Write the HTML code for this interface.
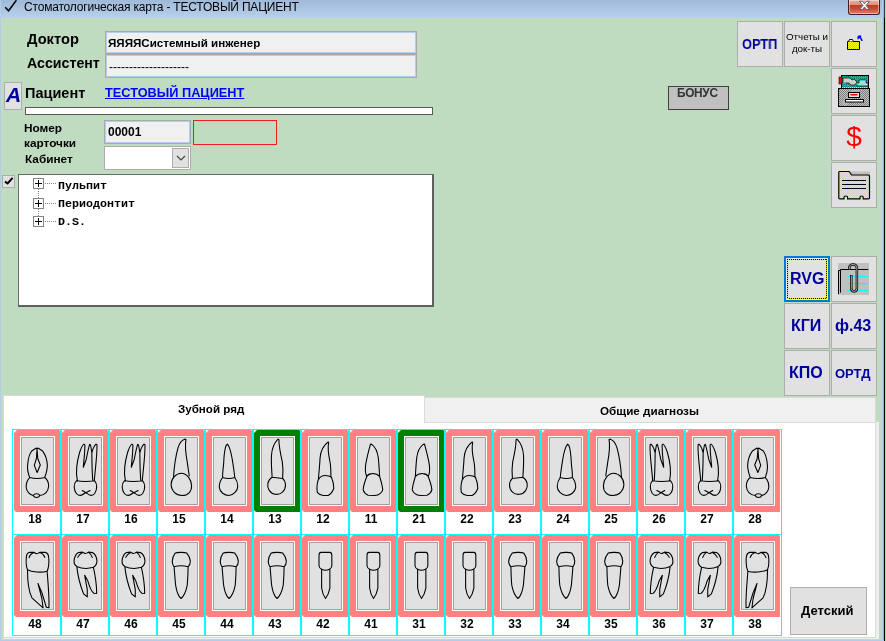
<!DOCTYPE html>
<html lang="ru"><head><meta charset="utf-8"><title>Стоматологическая карта</title>
<style>
*{box-sizing:border-box;margin:0;padding:0}
html,body{width:886px;height:641px;overflow:hidden}
body{position:relative;background:#c0dcc0;font-family:"Liberation Sans",sans-serif;color:#000}
.a{position:absolute}
.t{position:absolute;white-space:nowrap;line-height:1;will-change:transform}
.b{font-weight:bold}
#title{left:0;top:0;width:886px;height:18px;background:linear-gradient(#9fb9d9,#b7d1eb)}
.btn{position:absolute;width:46px;height:46px;background:#e1e1e1;border:1px solid #adadad}
.btn .t{color:#00009c;font-weight:bold}
.fld{position:absolute;background:#f0f0f0;border:1px solid #a9a9a9;box-shadow:inset 0 0 0 1px #b4cdf2}
.cy{position:absolute;background:#00ffff}
.pk{position:absolute;width:46px;height:82px;background:#ff8080;clip-path:polygon(3px 0,45px 0,46px 1px,46px 82px,2px 82px,0 80px,0 3px)}
.pk.gr{background:#008000}
.in{position:absolute;left:6px;top:6px;width:35px;height:70px;background:#e1e1e1;border:1px solid #fff;box-shadow:inset 0 0 0 1px #a0a0a0}
.tg{position:absolute;left:-1px;top:-1px;overflow:visible}
.tg path{fill:none;stroke:#000;stroke-width:8.3;stroke-linejoin:round;stroke-linecap:round}
.num{will-change:transform;position:absolute;width:46px;text-align:center;font-weight:bold;font-size:12px;line-height:12px}
.tree{font-family:"Liberation Mono",monospace;font-weight:bold;font-size:11.67px}
.pm{position:absolute;width:11px;height:11px;border:1px solid #848484;background:#fff}
.pm:before{content:"";position:absolute;left:1px;top:4px;width:7px;height:1px;background:#000}
.pm:after{content:"";position:absolute;left:4px;top:1px;width:1px;height:7px;background:#000}
.fh{background:repeating-linear-gradient(90deg,#000 0 1px,#e6e000 1px 2px)}
.fv{background:repeating-linear-gradient(180deg,#000 0 1px,#e6e000 1px 2px)}
.dh{position:absolute;height:1px;background:repeating-linear-gradient(90deg,#808080 0 1px,transparent 1px 2px)}
.dv{position:absolute;width:1px;background:repeating-linear-gradient(180deg,#808080 0 1px,transparent 1px 2px)}
</style></head><body>

<!-- window frame -->
<div class="a" id="title"></div>
<svg class="a" style="left:4px;top:0" width="15" height="14" viewBox="0 0 15 14"><path d="M1.2,7.2 L4.6,10.8 L12.4,0.2" fill="none" stroke="#000" stroke-width="1.5"/></svg>
<div class="t" style="left:24px;top:0.5px;font-size:12px;line-height:13px;letter-spacing:-0.19px" id="ttl">Стоматологическая карта - ТЕСТОВЫЙ ПАЦИЕНТ</div>
<div class="a" id="close" style="left:848px;top:0;width:32px;height:15px;border:1px solid #4a1a22;border-top:0;border-radius:0 0 3px 3px;background:linear-gradient(#e8ada0 0,#dd8f80 34%,#bd3c1f 37%,#c54c30 62%,#d9826e 100%);box-shadow:inset 0 0 0 1px rgba(255,255,255,.45)">
<svg class="a" style="left:8.5px;top:0px" width="13" height="10.8" viewBox="0 0 13 10" preserveAspectRatio="none"><path d="M1.5,1.2 L4.4,1.2 L6.5,3.5 L8.6,1.2 L11.5,1.2 L8.1,5 L11.5,8.8 L8.6,8.8 L6.5,6.5 L4.4,8.8 L1.5,8.8 L4.9,5 Z" fill="#fff" stroke="#4d5a70" stroke-width="0.9"/></svg>
</div>
<div class="a" style="left:0;top:0;width:1px;height:641px;background:#b5cce8"></div>
<div class="a" style="left:882px;top:0;width:1px;height:641px;background:#b9cce8"></div>
<div class="a" style="left:883px;top:0;width:1px;height:641px;background:#5ccbfa"></div>
<div class="a" style="left:884px;top:0;width:1px;height:641px;background:#000"></div>
<div class="a" style="left:884px;top:0;width:1px;height:18px;background:#2f3f56"></div>
<div class="a" style="left:885px;top:0;width:1px;height:641px;background:#80ff80"></div>
<div class="a" style="left:0;top:640px;width:884px;height:1px;background:#b5cce8"></div>

<!-- form -->
<div class="t b" style="left:27px;top:32px;font-size:14.7px" id="ldoc">Доктор</div>
<div class="t b" style="left:27px;top:56px;font-size:14.2px" id="lass">Ассистент</div>
<div class="fld" style="left:105px;top:31px;width:312px;height:23px"></div>
<div class="fld" style="left:105px;top:54px;width:312px;height:24px"></div>
<div class="t b" style="left:108px;top:37px;font-size:11.6px" id="fdoc">ЯЯЯЯСистемный инженер</div>
<div class="t" style="left:108.5px;top:61px;font-size:12px" id="fass">--------------------</div>

<div class="a" style="left:4px;top:82px;width:18px;height:28px;background:#e1e1e1;border:1px solid #adadad"></div>
<div class="t b" style="left:5.5px;top:84px;font-size:21px;font-style:italic;color:#00009c" id="abtn">A</div>
<div class="t b" style="left:25px;top:86px;font-size:14.5px" id="lpat">Пациент</div>
<div class="t b" style="left:105px;top:86.5px;font-size:12.75px;color:#0000ff;text-decoration:underline" id="link">ТЕСТОВЫЙ ПАЦИЕНТ</div>
<div class="a" style="left:25px;top:107px;width:408px;height:8px;background:#fff;border:1px solid #5a5a5a"></div>

<div class="t b" style="left:24px;top:121px;font-size:11.8px;line-height:15px;white-space:normal;width:70px" id="lnum">Номер карточки</div>
<div class="fld" style="left:104px;top:120px;width:87px;height:24px"></div>
<div class="t b" style="left:108px;top:126px;font-size:12px" id="fnum">00001</div>
<div class="a" style="left:193px;top:120px;width:84px;height:25px;border:1px solid #ee1c1c"></div>
<div class="t b" style="left:25px;top:154px;font-size:11.8px" id="lcab">Кабинет</div>
<div class="a" style="left:104px;top:146px;width:87px;height:24px;background:#fff;border:1px solid #adadad"></div>
<div class="a" style="left:172px;top:148px;width:17px;height:20px;background:#e1e1e1;border:1px solid #adadad"></div>
<svg class="a" style="left:176px;top:155px" width="10" height="6" viewBox="0 0 10 6"><path d="M1,1 L5,5 L9,1" fill="none" stroke="#444" stroke-width="1.2"/></svg>

<!-- small check button -->
<div class="a" style="left:2px;top:175px;width:13px;height:13px;background:#e1e1e1;border:1px solid #adadad"></div>
<svg class="a" style="left:4px;top:177px" width="10" height="9" viewBox="0 0 10 9"><path d="M1,4.6 L3.6,6.4 L8.6,0.8" fill="none" stroke="#000" stroke-width="2"/></svg>

<!-- tree box -->
<div class="a" style="left:18px;top:174px;width:416px;height:133px;background:#fff;border:1px solid #696969;border-right:2px solid #606060;border-bottom:2px solid #606060"></div>
<div class="dv" style="left:38px;top:189px;height:28px"></div>
<div class="dh" style="left:45px;top:183px;width:12px"></div>
<div class="dh" style="left:45px;top:203px;width:12px"></div>
<div class="dh" style="left:45px;top:221px;width:12px"></div>
<div class="pm" style="left:33px;top:178px"></div>
<div class="pm" style="left:33px;top:198px"></div>
<div class="pm" style="left:33px;top:216px"></div>
<div class="t tree" style="left:58px;top:180.5px" id="tr1">Пульпит</div>
<div class="t tree" style="left:58px;top:198.5px" id="tr2">Периодонтит</div>
<div class="t tree" style="left:58px;top:216.5px" id="tr3">D.S.</div>

<!-- bonus -->
<div class="a" style="left:668px;top:86px;width:61px;height:24px;background:#c0c0c0;border:1px solid #404040"></div>
<div class="t b" style="left:677px;top:88px;font-size:11.9px;letter-spacing:-0.35px;color:#333" id="bonus">БОНУС</div>

<!-- buttons -->
<div class="btn " style="left:737px;top:21px"><div class="t" style="left:4px;top:15px;font-size:14px;transform:scaleX(0.915);transform-origin:0 0" id="ortp">ОРТП</div></div>
<div class="btn " style="left:784px;top:21px"><div class="t" style="left:0;top:9px;width:44px;text-align:center;font-size:9.8px;line-height:11.5px;white-space:normal;color:#000;font-weight:normal" id="otch">Отчеты и<br>док-ты</div></div>
<div class="btn " style="left:831px;top:21px"><svg class="a" style="left:13px;top:12px" width="20" height="20" viewBox="0 0 20 20">
<defs><pattern id="dy" width="2" height="2" patternUnits="userSpaceOnUse"><rect width="2" height="2" fill="#ffff00"/><rect width="1" height="1" fill="#c0c0c0"/><rect x="1" y="1" width="1" height="1" fill="#c0c0c0"/></pattern></defs>
<path d="M2.5,7.5 H14.5 V15.5 H2.5 Z" fill="url(#dy)" stroke="#000"/>
<path d="M3.5,7.5 L4.5,5.5 H7.5 L8.5,7.5" fill="#fff" stroke="#000"/>
<path d="M13.200,2.200 L16.200,2.200 M13.200,2.200 L13.200,5.200 M13.400,2.400 C15.500,3.600 16.800,5 17,7" fill="none" stroke="#0000ff" stroke-width="1.4"/>
</svg></div>
<div class="btn " style="left:831px;top:68px"><svg class="a" style="left:6px;top:5px" width="33" height="34" viewBox="0 0 33 34">
<defs><pattern id="dg" width="2" height="2" patternUnits="userSpaceOnUse"><rect width="2" height="2" fill="#c0c0c0"/><rect width="1" height="1" fill="#808080"/><rect x="1" y="1" width="1" height="1" fill="#808080"/></pattern>
<pattern id="dt" width="2" height="2" patternUnits="userSpaceOnUse"><rect width="2" height="2" fill="#808080"/><rect width="1" height="1" fill="#008080"/></pattern></defs>
<rect x="3.5" y="1.5" width="27" height="13" fill="url(#dt)" stroke="#000"/>
<rect x="1" y="3" width="3" height="7" fill="#ff0000" stroke="#000" stroke-width="0.6"/>
<path d="M5,4 H12 L14,6 L16,5 L19,8 L17,11 H13 L11,9 H5 Z" fill="#d0d0d0" stroke="#000" stroke-width="0.7"/>
<path d="M21,6 H28 V9 H30 V12 H19 V9 H21 Z" fill="#d8d8d8" stroke="#000" stroke-width="0.7"/>
<path d="M5,9 H8 M18,10 H27 M22,7 H28" stroke="#00ffff" stroke-width="1"/>
<path d="M2,13.5 H30" stroke="#ffff00" stroke-width="1" stroke-dasharray="1 1"/>
<rect x="0.5" y="14.5" width="31" height="18" fill="url(#dg)" stroke="#000"/>
<path d="M3,30 L14,16 H22 L8,32 Z" fill="#c0c0c0" opacity="0.55"/>
<rect x="10.5" y="18.500" width="11" height="5" fill="#e0e0e0" stroke="#000"/>
<rect x="12.500" y="20" width="7" height="1.5" fill="#ff0000"/>
<rect x="7.5" y="25.500" width="18" height="2.500" fill="#fff" stroke="#000"/>
</svg></div>
<div class="btn " style="left:831px;top:115px"><div class="t" style="left:-0.5px;top:7px;width:44px;text-align:center;font-size:28px;color:#ff0000;font-weight:normal" id="dollar">$</div></div>
<div class="btn " style="left:831px;top:162px"><svg class="a" style="left:6px;top:6px" width="33" height="32" viewBox="0 0 33 32">
<rect x="13" y="2.500" width="19" height="3.500" fill="#c0c0c0"/>
<path d="M1.500,2.500 Q0.8,2.500 0.800,4 V29 Q0.800,29.800 1.800,29.800 H6 V28.200 Q6,27 7.800,27 Q9.600,27 9.600,28.200 V29.800 H22 V28.200 Q22,27 23.600,27 Q25.200,27 25.200,28.200 V29.800 H30.500 Q31.500,29.800 31.500,29 V7 Q31.500,6 30.500,6 H13.500 L12,3.500 Q11.600,2.500 10.500,2.500 Z" fill="url(#dy2)" stroke="#000" stroke-width="1.2"/>
<defs><pattern id="dy2" width="2" height="2" patternUnits="userSpaceOnUse"><rect width="2" height="2" fill="#d0d0d0"/><rect width="1" height="1" fill="#f2f24a"/><rect x="1" y="1" width="1" height="1" fill="#f2f24a"/></pattern></defs>
<path d="M4,11.500 H28 M4,15.500 H28 M4,19.500 H28" stroke="#000" stroke-width="1"/>
</svg></div>

<div class="btn " style="left:784px;top:256px"><div class="a" style="left:-1px;top:-1px;width:46px;height:46px;border:2px solid #0078d7;box-shadow:inset 0 0 0 1px #ececec"></div><div class="a fh" style="left:2px;top:2px;width:40px;height:1px"></div><div class="a fh" style="left:2px;top:41px;width:40px;height:1px"></div><div class="a fv" style="left:2px;top:2px;width:1px;height:40px"></div><div class="a fv" style="left:41px;top:2px;width:1px;height:40px"></div><div class="t" style="left:5px;top:14px;font-size:16px" id="rvg">RVG</div></div>
<div class="btn " style="left:831px;top:256px"><svg class="a" style="left:6px;top:6px" width="32" height="33" viewBox="0 0 32 33">
<rect x="0" y="0" width="31" height="32" fill="#c0c0c0"/>
<path d="M30.300,6.500 H2.500 V29.600 M0.500,31 V7.500 H2.500" fill="none" stroke="#000" stroke-width="1"/>
<path d="M9.200,13.700 H30.300 M9.200,20.600 H30.300 M9.200,27.500 H30.300" stroke="#00ffff" stroke-width="1.300"/>
<path d="M11.300,6.400 V5 a3.800,3.600 0 0 1 7.600,0 V25.600 a2.800,2.800 0 0 1 -5.600,0 V12" fill="none" stroke="#000" stroke-width="2.500"/>
<path d="M11.300,6.400 V5 a3.800,3.600 0 0 1 7.600,0 V25.600 a2.800,2.800 0 0 1 -5.600,0 V12.500" fill="none" stroke="#dcdcdc" stroke-width="0.800"/>
</svg></div>
<div class="btn " style="left:784px;top:303px"><div class="t" style="left:6px;top:14px;font-size:16px" id="kgi">КГИ</div></div>
<div class="btn " style="left:831px;top:303px"><div class="t" style="left:2.5px;top:14px;font-size:16px" id="f43">ф.43</div></div>
<div class="btn " style="left:784px;top:350px"><div class="t" style="left:4px;top:14px;font-size:16px" id="kpo">КПО</div></div>
<div class="btn " style="left:831px;top:350px"><div class="t" style="left:3px;top:15.5px;font-size:13px" id="ortd">ОРТД</div></div>

<!-- tab control -->
<div class="a" style="left:3px;top:422px;width:876px;height:217px;background:#f0f0f0"></div>
<div class="a" style="left:3px;top:422px;width:873px;height:216px;background:#fff;border:1px solid #d9d9d9"></div>
<div class="a" style="left:424px;top:397px;width:452px;height:26px;background:#f0f0f0;border:1px solid #d9d9d9"></div>
<div class="a" style="left:3px;top:395px;width:422px;height:28px;background:#fff;border:1px solid #d9d9d9;border-bottom:0"></div><div class="a" style="left:4px;top:422px;width:420px;height:2px;background:#fff"></div>
<div class="t b" style="left:178px;top:403px;font-size:11.6px" id="tab1">Зубной ряд</div>
<div class="t b" style="left:600px;top:404.5px;font-size:11.7px" id="tab2">Общие диагнозы</div>

<div class="cy" style="left:12px;top:429px;width:770px;height:1px"></div>
<div class="cy" style="left:12px;top:534px;width:770px;height:1px"></div>
<div class="cy" style="left:12px;top:635px;width:770px;height:1px"></div>
<div class="cy" style="left:12px;top:429px;width:1px;height:207px"></div>
<div class="cy" style="left:781px;top:429px;width:1px;height:207px"></div>
<div class="cy" style="left:60px;top:429px;width:2px;height:207px"></div>
<div class="cy" style="left:108px;top:429px;width:2px;height:207px"></div>
<div class="cy" style="left:156px;top:429px;width:2px;height:207px"></div>
<div class="cy" style="left:204px;top:429px;width:2px;height:207px"></div>
<div class="cy" style="left:252px;top:429px;width:2px;height:207px"></div>
<div class="cy" style="left:300px;top:429px;width:2px;height:207px"></div>
<div class="cy" style="left:348px;top:429px;width:2px;height:207px"></div>
<div class="cy" style="left:396px;top:429px;width:2px;height:207px"></div>
<div class="cy" style="left:444px;top:429px;width:2px;height:207px"></div>
<div class="cy" style="left:492px;top:429px;width:2px;height:207px"></div>
<div class="cy" style="left:540px;top:429px;width:2px;height:207px"></div>
<div class="cy" style="left:588px;top:429px;width:2px;height:207px"></div>
<div class="cy" style="left:636px;top:429px;width:2px;height:207px"></div>
<div class="cy" style="left:684px;top:429px;width:2px;height:207px"></div>
<div class="cy" style="left:732px;top:429px;width:2px;height:207px"></div>
<div class="pk" style="left:14px;top:430px"><div class="in"><svg class="tg" width="35" height="70" viewBox="0 0 35 70"><path transform="scale(0.13098) translate(-61,-61)" d="M135,378 C122,345 116,300 120,275 C123,240 130,205 150,176 L186,153 L192,160 L198,153 L234,176 C256,205 268,240 270,285 C270,320 260,350 250,378 M191,160 L186,235 L170,285 L192,340 L216,282 L197,235 Z M135,378 C118,395 108,425 108,450 C110,485 135,510 162,515 C170,498 206,498 212,515 C245,512 275,490 280,445 C280,415 268,392 250,378 M135,378 Q190,392 250,378 M162,515 C170,535 205,535 212,515"/></svg></div></div><div class="num" style="left:12px;top:513px">18</div>
<div class="pk" style="left:62px;top:430px"><div class="in"><svg class="tg" width="35" height="70" viewBox="0 0 35 70"><path transform="scale(0.13098) translate(-61,-61)" d="M132,400 C118,330 125,270 150,185 C160,155 170,130 183,123 L190,130 C190,200 180,260 178,300 L200,240 C210,190 218,150 226,125 L233,130 C238,150 240,170 243,190 C244,250 244,330 250,400 M243,190 C250,160 262,135 275,123 L282,128 C285,200 270,300 262,400 M125,403 Q190,414 265,403 M125,403 C103,425 103,470 125,500 C140,520 165,518 185,500 L230,477 M265,403 C285,425 285,470 265,500 C250,520 225,518 208,500 L170,477"/></svg></div></div><div class="num" style="left:60px;top:513px">17</div>
<div class="pk" style="left:110px;top:430px"><div class="in"><svg class="tg" width="35" height="70" viewBox="0 0 35 70"><path transform="scale(0.13098) translate(-61,-61)" d="M132,400 C118,330 125,270 150,185 C160,155 170,130 183,123 L190,130 C190,200 180,260 178,300 L200,240 C210,190 218,150 226,125 L233,130 C238,150 240,170 243,190 C244,250 244,330 250,400 M243,190 C250,160 262,135 275,123 L282,128 C285,200 270,300 262,400 M125,403 Q190,414 265,403 M125,403 C103,425 103,470 125,500 C140,520 165,518 185,500 L230,477 M265,403 C285,425 285,470 265,500 C250,520 225,518 208,500 L170,477"/></svg></div></div><div class="num" style="left:108px;top:513px">16</div>
<div class="pk" style="left:158px;top:430px"><div class="in"><svg class="tg" width="35" height="70" viewBox="0 0 35 70"><path transform="scale(0.13098) translate(-427.5,-61)" d="M500,375 C505,300 515,220 535,150 C545,115 565,92 585,85 L595,88 C588,130 592,190 605,260 C612,310 618,345 620,365 M560,345 C520,345 482,385 482,430 C482,480 520,515 565,515 C610,515 640,485 638,440 C636,390 600,345 560,345 Z"/></svg></div></div><div class="num" style="left:156px;top:513px">15</div>
<div class="pk" style="left:206px;top:430px"><div class="in"><svg class="tg" width="35" height="70" viewBox="0 0 35 70"><path transform="scale(0.13098) translate(-61,-61)" d="M142,378 C140,340 148,300 150,270 C152,220 158,160 168,135 L178,123 L190,140 C205,175 215,230 222,280 C228,320 232,350 235,378 M142,378 Q190,392 235,378 M142,378 C125,400 115,430 117,455 C122,490 155,515 190,515 C225,512 258,480 258,445 C256,415 248,395 235,378"/></svg></div></div><div class="num" style="left:204px;top:513px">14</div>
<div class="pk gr" style="left:254px;top:430px"><div class="in"><svg class="tg" width="35" height="70" viewBox="0 0 35 70"><path transform="scale(0.13098) translate(-427.5,-61)" d="M520,375 C518,330 512,280 515,210 C518,160 535,115 565,85 L572,90 C572,130 582,190 598,260 C604,300 603,350 600,385 M520,376 L600,385 M520,376 A68,70 0 1 0 600,385"/></svg></div></div><div class="num" style="left:252px;top:513px">13</div>
<div class="pk" style="left:302px;top:430px"><div class="in"><svg class="tg" width="35" height="70" viewBox="0 0 35 70"><path transform="scale(0.13098) translate(-61,-61)" d="M140,395 C143,350 150,300 153,230 C157,180 175,135 215,107 L219,110 C210,150 216,200 230,265 C236,300 236,340 236,372 M140,395 C150,375 170,362 192,362 C215,362 232,368 240,376 C250,400 258,430 258,460 C250,485 235,505 215,515 L175,515 C155,510 140,502 132,492 C128,460 130,420 140,395"/></svg></div></div><div class="num" style="left:300px;top:513px">12</div>
<div class="pk" style="left:350px;top:430px"><div class="in"><svg class="tg" width="35" height="70" viewBox="0 0 35 70"><path transform="scale(0.13098) translate(-427.5,-61)" d="M510,370 C495,340 498,300 503,270 C512,220 525,170 538,123 L548,125 C575,145 592,180 598,230 C604,290 606,340 608,370 M510,370 C520,352 535,348 550,348 C575,347 595,355 608,370 C618,400 628,435 632,470 C625,495 600,512 570,515 L520,513 C500,505 488,492 482,472 C485,440 498,400 510,370"/></svg></div></div><div class="num" style="left:348px;top:513px">11</div>
<div class="pk gr" style="left:398px;top:430px"><div class="in"><svg class="tg" width="35" height="70" viewBox="0 0 35 70"><path transform="translate(35,0) scale(-1,1) scale(0.13098) translate(-427.5,-61)" d="M510,370 C495,340 498,300 503,270 C512,220 525,170 538,123 L548,125 C575,145 592,180 598,230 C604,290 606,340 608,370 M510,370 C520,352 535,348 550,348 C575,347 595,355 608,370 C618,400 628,435 632,470 C625,495 600,512 570,515 L520,513 C500,505 488,492 482,472 C485,440 498,400 510,370"/></svg></div></div><div class="num" style="left:396px;top:513px">21</div>
<div class="pk" style="left:446px;top:430px"><div class="in"><svg class="tg" width="35" height="70" viewBox="0 0 35 70"><path transform="scale(0.13098) translate(-61,-61)" d="M140,395 C143,350 150,300 153,230 C157,180 175,135 215,107 L219,110 C210,150 216,200 230,265 C236,300 236,340 236,372 M140,395 C150,375 170,362 192,362 C215,362 232,368 240,376 C250,400 258,430 258,460 C250,485 235,505 215,515 L175,515 C155,510 140,502 132,492 C128,460 130,420 140,395"/></svg></div></div><div class="num" style="left:444px;top:513px">22</div>
<div class="pk" style="left:494px;top:430px"><div class="in"><svg class="tg" width="35" height="70" viewBox="0 0 35 70"><path transform="translate(35,0) scale(-1,1) scale(0.13098) translate(-427.5,-61)" d="M520,375 C518,330 512,280 515,210 C518,160 535,115 565,85 L572,90 C572,130 582,190 598,260 C604,300 603,350 600,385 M520,376 L600,385 M520,376 A68,70 0 1 0 600,385"/></svg></div></div><div class="num" style="left:492px;top:513px">23</div>
<div class="pk" style="left:542px;top:430px"><div class="in"><svg class="tg" width="35" height="70" viewBox="0 0 35 70"><path transform="translate(35,0) scale(-1,1) scale(0.13098) translate(-61,-61)" d="M142,378 C140,340 148,300 150,270 C152,220 158,160 168,135 L178,123 L190,140 C205,175 215,230 222,280 C228,320 232,350 235,378 M142,378 Q190,392 235,378 M142,378 C125,400 115,430 117,455 C122,490 155,515 190,515 C225,512 258,480 258,445 C256,415 248,395 235,378"/></svg></div></div><div class="num" style="left:540px;top:513px">24</div>
<div class="pk" style="left:590px;top:430px"><div class="in"><svg class="tg" width="35" height="70" viewBox="0 0 35 70"><path transform="translate(35,0) scale(-1,1) scale(0.13098) translate(-427.5,-61)" d="M500,375 C505,300 515,220 535,150 C545,115 565,92 585,85 L595,88 C588,130 592,190 605,260 C612,310 618,345 620,365 M560,345 C520,345 482,385 482,430 C482,480 520,515 565,515 C610,515 640,485 638,440 C636,390 600,345 560,345 Z"/></svg></div></div><div class="num" style="left:588px;top:513px">25</div>
<div class="pk" style="left:638px;top:430px"><div class="in"><svg class="tg" width="35" height="70" viewBox="0 0 35 70"><path transform="translate(35,0) scale(-1,1) scale(0.13098) translate(-61,-61)" d="M132,400 C118,330 125,270 150,185 C160,155 170,130 183,123 L190,130 C190,200 180,260 178,300 L200,240 C210,190 218,150 226,125 L233,130 C238,150 240,170 243,190 C244,250 244,330 250,400 M243,190 C250,160 262,135 275,123 L282,128 C285,200 270,300 262,400 M125,403 Q190,414 265,403 M125,403 C103,425 103,470 125,500 C140,520 165,518 185,500 L230,477 M265,403 C285,425 285,470 265,500 C250,520 225,518 208,500 L170,477"/></svg></div></div><div class="num" style="left:636px;top:513px">26</div>
<div class="pk" style="left:686px;top:430px"><div class="in"><svg class="tg" width="35" height="70" viewBox="0 0 35 70"><path transform="translate(35,0) scale(-1,1) scale(0.13098) translate(-61,-61)" d="M132,400 C118,330 125,270 150,185 C160,155 170,130 183,123 L190,130 C190,200 180,260 178,300 L200,240 C210,190 218,150 226,125 L233,130 C238,150 240,170 243,190 C244,250 244,330 250,400 M243,190 C250,160 262,135 275,123 L282,128 C285,200 270,300 262,400 M125,403 Q190,414 265,403 M125,403 C103,425 103,470 125,500 C140,520 165,518 185,500 L230,477 M265,403 C285,425 285,470 265,500 C250,520 225,518 208,500 L170,477"/></svg></div></div><div class="num" style="left:684px;top:513px">27</div>
<div class="pk" style="left:734px;top:430px"><div class="in"><svg class="tg" width="35" height="70" viewBox="0 0 35 70"><path transform="translate(35,0) scale(-1,1) scale(0.13098) translate(-61,-61)" d="M135,378 C122,345 116,300 120,275 C123,240 130,205 150,176 L186,153 L192,160 L198,153 L234,176 C256,205 268,240 270,285 C270,320 260,350 250,378 M191,160 L186,235 L170,285 L192,340 L216,282 L197,235 Z M135,378 C118,395 108,425 108,450 C110,485 135,510 162,515 C170,498 206,498 212,515 C245,512 275,490 280,445 C280,415 268,392 250,378 M135,378 Q190,392 250,378 M162,515 C170,535 205,535 212,515"/></svg></div></div><div class="num" style="left:732px;top:513px">28</div>
<div class="pk" style="left:14px;top:535px"><div class="in"><svg class="tg" width="35" height="70" viewBox="0 0 35 70"><path transform="scale(0.13098) translate(-61,-61)" d="M118,280 C108,255 106,215 110,180 C112,160 120,150 135,148 L165,148 C175,150 185,158 190,158 C197,158 205,150 215,148 L255,148 C270,152 278,165 280,185 C284,225 280,265 268,292 M118,280 C150,298 225,305 268,292 M130,188 C135,170 150,155 165,148 M215,148 C232,155 245,168 250,186 M118,280 C118,380 125,440 152,495 L237,572 L228,500 L198,385 L228,455 L262,567 L282,570 C285,480 275,380 268,292"/></svg></div></div><div class="num" style="left:12px;top:618px">48</div>
<div class="pk" style="left:62px;top:535px"><div class="in"><svg class="tg" width="35" height="70" viewBox="0 0 35 70"><path transform="scale(0.13098) translate(-61,-61)" d="M128,255 C112,245 106,225 108,210 C110,185 122,160 140,149 L172,146 C180,150 188,157 195,157 C202,157 208,150 217,146 L250,150 C268,160 280,185 282,212 C282,235 272,252 255,262 M128,255 C165,272 220,272 255,262 M135,186 C142,170 155,156 172,148 M217,148 C230,155 240,168 246,186 M128,255 C135,320 150,390 180,465 L208,488 L208,430 L188,322 L212,365 C225,410 240,445 258,460 L280,462 C280,400 268,320 255,262"/></svg></div></div><div class="num" style="left:60px;top:618px">47</div>
<div class="pk" style="left:110px;top:535px"><div class="in"><svg class="tg" width="35" height="70" viewBox="0 0 35 70"><path transform="scale(0.13098) translate(-61,-61)" d="M128,255 C112,245 106,225 108,210 C110,185 122,160 140,149 L172,146 C180,150 188,157 195,157 C202,157 208,150 217,146 L250,150 C268,160 280,185 282,212 C282,235 272,252 255,262 M128,255 C165,272 220,272 255,262 M135,186 C142,170 155,156 172,148 M217,148 C230,155 240,168 246,186 M128,255 C135,320 150,390 180,465 L208,488 L208,430 L188,322 L212,365 C225,410 240,445 258,460 L280,462 C280,400 268,320 255,262"/></svg></div></div><div class="num" style="left:108px;top:618px">46</div>
<div class="pk" style="left:158px;top:535px"><div class="in"><svg class="tg" width="35" height="70" viewBox="0 0 35 70"><path transform="scale(0.13098) translate(-61,-61)" d="M138,258 C128,245 123,230 124,215 C126,195 132,172 145,155 C160,146 215,146 235,153 C250,170 260,195 262,215 C262,232 255,248 245,258 M138,258 C165,250 215,250 245,258 M138,258 C142,310 146,360 150,400 C158,450 172,485 191,500 C210,485 228,450 238,400 C242,360 244,310 245,258"/></svg></div></div><div class="num" style="left:156px;top:618px">45</div>
<div class="pk" style="left:206px;top:535px"><div class="in"><svg class="tg" width="35" height="70" viewBox="0 0 35 70"><path transform="scale(0.13098) translate(-61,-61)" d="M138,258 C128,245 123,230 124,215 C126,195 132,172 145,155 C160,146 215,146 235,153 C250,170 260,195 262,215 C262,232 255,248 245,258 M138,258 C165,250 215,250 245,258 M138,258 C142,310 146,360 150,400 C158,450 172,485 191,500 C210,485 228,450 238,400 C242,360 244,310 245,258"/></svg></div></div><div class="num" style="left:204px;top:618px">44</div>
<div class="pk" style="left:254px;top:535px"><div class="in"><svg class="tg" width="35" height="70" viewBox="0 0 35 70"><path transform="scale(0.13098) translate(-61,-61)" d="M138,258 C128,245 123,230 124,215 C126,195 132,172 145,155 C160,146 215,146 235,153 C250,170 260,195 262,215 C262,232 255,248 245,258 M138,258 C165,250 215,250 245,258 M138,258 C142,310 146,360 150,400 C158,450 172,485 191,500 C210,485 228,450 238,400 C242,360 244,310 245,258"/></svg></div></div><div class="num" style="left:252px;top:618px">43</div>
<div class="pk" style="left:302px;top:535px"><div class="in"><svg class="tg" width="35" height="70" viewBox="0 0 35 70"><path transform="scale(0.13098) translate(-61,-61)" d="M160,148 L228,148 Q243,150 243,170 L243,250 Q240,270 225,277 Q195,292 165,277 Q148,270 145,250 L145,170 Q145,150 160,148 Z M165,278 L165,420 Q172,470 195,500 Q218,470 228,420 L228,278"/></svg></div></div><div class="num" style="left:300px;top:618px">42</div>
<div class="pk" style="left:350px;top:535px"><div class="in"><svg class="tg" width="35" height="70" viewBox="0 0 35 70"><path transform="scale(0.13098) translate(-61,-61)" d="M160,148 L228,148 Q243,150 243,170 L243,250 Q240,270 225,277 Q195,292 165,277 Q148,270 145,250 L145,170 Q145,150 160,148 Z M165,278 L165,420 Q172,470 195,500 Q218,470 228,420 L228,278"/></svg></div></div><div class="num" style="left:348px;top:618px">41</div>
<div class="pk" style="left:398px;top:535px"><div class="in"><svg class="tg" width="35" height="70" viewBox="0 0 35 70"><path transform="scale(0.13098) translate(-61,-61)" d="M160,148 L228,148 Q243,150 243,170 L243,250 Q240,270 225,277 Q195,292 165,277 Q148,270 145,250 L145,170 Q145,150 160,148 Z M165,278 L165,420 Q172,470 195,500 Q218,470 228,420 L228,278"/></svg></div></div><div class="num" style="left:396px;top:618px">31</div>
<div class="pk" style="left:446px;top:535px"><div class="in"><svg class="tg" width="35" height="70" viewBox="0 0 35 70"><path transform="scale(0.13098) translate(-61,-61)" d="M160,148 L228,148 Q243,150 243,170 L243,250 Q240,270 225,277 Q195,292 165,277 Q148,270 145,250 L145,170 Q145,150 160,148 Z M165,278 L165,420 Q172,470 195,500 Q218,470 228,420 L228,278"/></svg></div></div><div class="num" style="left:444px;top:618px">32</div>
<div class="pk" style="left:494px;top:535px"><div class="in"><svg class="tg" width="35" height="70" viewBox="0 0 35 70"><path transform="translate(35,0) scale(-1,1) scale(0.13098) translate(-61,-61)" d="M138,258 C128,245 123,230 124,215 C126,195 132,172 145,155 C160,146 215,146 235,153 C250,170 260,195 262,215 C262,232 255,248 245,258 M138,258 C165,250 215,250 245,258 M138,258 C142,310 146,360 150,400 C158,450 172,485 191,500 C210,485 228,450 238,400 C242,360 244,310 245,258"/></svg></div></div><div class="num" style="left:492px;top:618px">33</div>
<div class="pk" style="left:542px;top:535px"><div class="in"><svg class="tg" width="35" height="70" viewBox="0 0 35 70"><path transform="translate(35,0) scale(-1,1) scale(0.13098) translate(-61,-61)" d="M138,258 C128,245 123,230 124,215 C126,195 132,172 145,155 C160,146 215,146 235,153 C250,170 260,195 262,215 C262,232 255,248 245,258 M138,258 C165,250 215,250 245,258 M138,258 C142,310 146,360 150,400 C158,450 172,485 191,500 C210,485 228,450 238,400 C242,360 244,310 245,258"/></svg></div></div><div class="num" style="left:540px;top:618px">34</div>
<div class="pk" style="left:590px;top:535px"><div class="in"><svg class="tg" width="35" height="70" viewBox="0 0 35 70"><path transform="translate(35,0) scale(-1,1) scale(0.13098) translate(-61,-61)" d="M138,258 C128,245 123,230 124,215 C126,195 132,172 145,155 C160,146 215,146 235,153 C250,170 260,195 262,215 C262,232 255,248 245,258 M138,258 C165,250 215,250 245,258 M138,258 C142,310 146,360 150,400 C158,450 172,485 191,500 C210,485 228,450 238,400 C242,360 244,310 245,258"/></svg></div></div><div class="num" style="left:588px;top:618px">35</div>
<div class="pk" style="left:638px;top:535px"><div class="in"><svg class="tg" width="35" height="70" viewBox="0 0 35 70"><path transform="translate(35,0) scale(-1,1) scale(0.13098) translate(-61,-61)" d="M128,255 C112,245 106,225 108,210 C110,185 122,160 140,149 L172,146 C180,150 188,157 195,157 C202,157 208,150 217,146 L250,150 C268,160 280,185 282,212 C282,235 272,252 255,262 M128,255 C165,272 220,272 255,262 M135,186 C142,170 155,156 172,148 M217,148 C230,155 240,168 246,186 M128,255 C135,320 150,390 180,465 L208,488 L208,430 L188,322 L212,365 C225,410 240,445 258,460 L280,462 C280,400 268,320 255,262"/></svg></div></div><div class="num" style="left:636px;top:618px">36</div>
<div class="pk" style="left:686px;top:535px"><div class="in"><svg class="tg" width="35" height="70" viewBox="0 0 35 70"><path transform="translate(35,0) scale(-1,1) scale(0.13098) translate(-61,-61)" d="M128,255 C112,245 106,225 108,210 C110,185 122,160 140,149 L172,146 C180,150 188,157 195,157 C202,157 208,150 217,146 L250,150 C268,160 280,185 282,212 C282,235 272,252 255,262 M128,255 C165,272 220,272 255,262 M135,186 C142,170 155,156 172,148 M217,148 C230,155 240,168 246,186 M128,255 C135,320 150,390 180,465 L208,488 L208,430 L188,322 L212,365 C225,410 240,445 258,460 L280,462 C280,400 268,320 255,262"/></svg></div></div><div class="num" style="left:684px;top:618px">37</div>
<div class="pk" style="left:734px;top:535px"><div class="in"><svg class="tg" width="35" height="70" viewBox="0 0 35 70"><path transform="translate(35,0) scale(-1,1) scale(0.13098) translate(-61,-61)" d="M118,280 C108,255 106,215 110,180 C112,160 120,150 135,148 L165,148 C175,150 185,158 190,158 C197,158 205,150 215,148 L255,148 C270,152 278,165 280,185 C284,225 280,265 268,292 M118,280 C150,298 225,305 268,292 M130,188 C135,170 150,155 165,148 M215,148 C232,155 245,168 250,186 M118,280 C118,380 125,440 152,495 L237,572 L228,500 L198,385 L228,455 L262,567 L282,570 C285,480 275,380 268,292"/></svg></div></div><div class="num" style="left:732px;top:618px">38</div>

<div class="a" style="left:790px;top:587px;width:77px;height:48px;background:#e1e1e1;border:1px solid #adadad"></div>
<div class="t b" style="left:801px;top:604px;font-size:13px" id="det">Детский</div>

</body></html>
